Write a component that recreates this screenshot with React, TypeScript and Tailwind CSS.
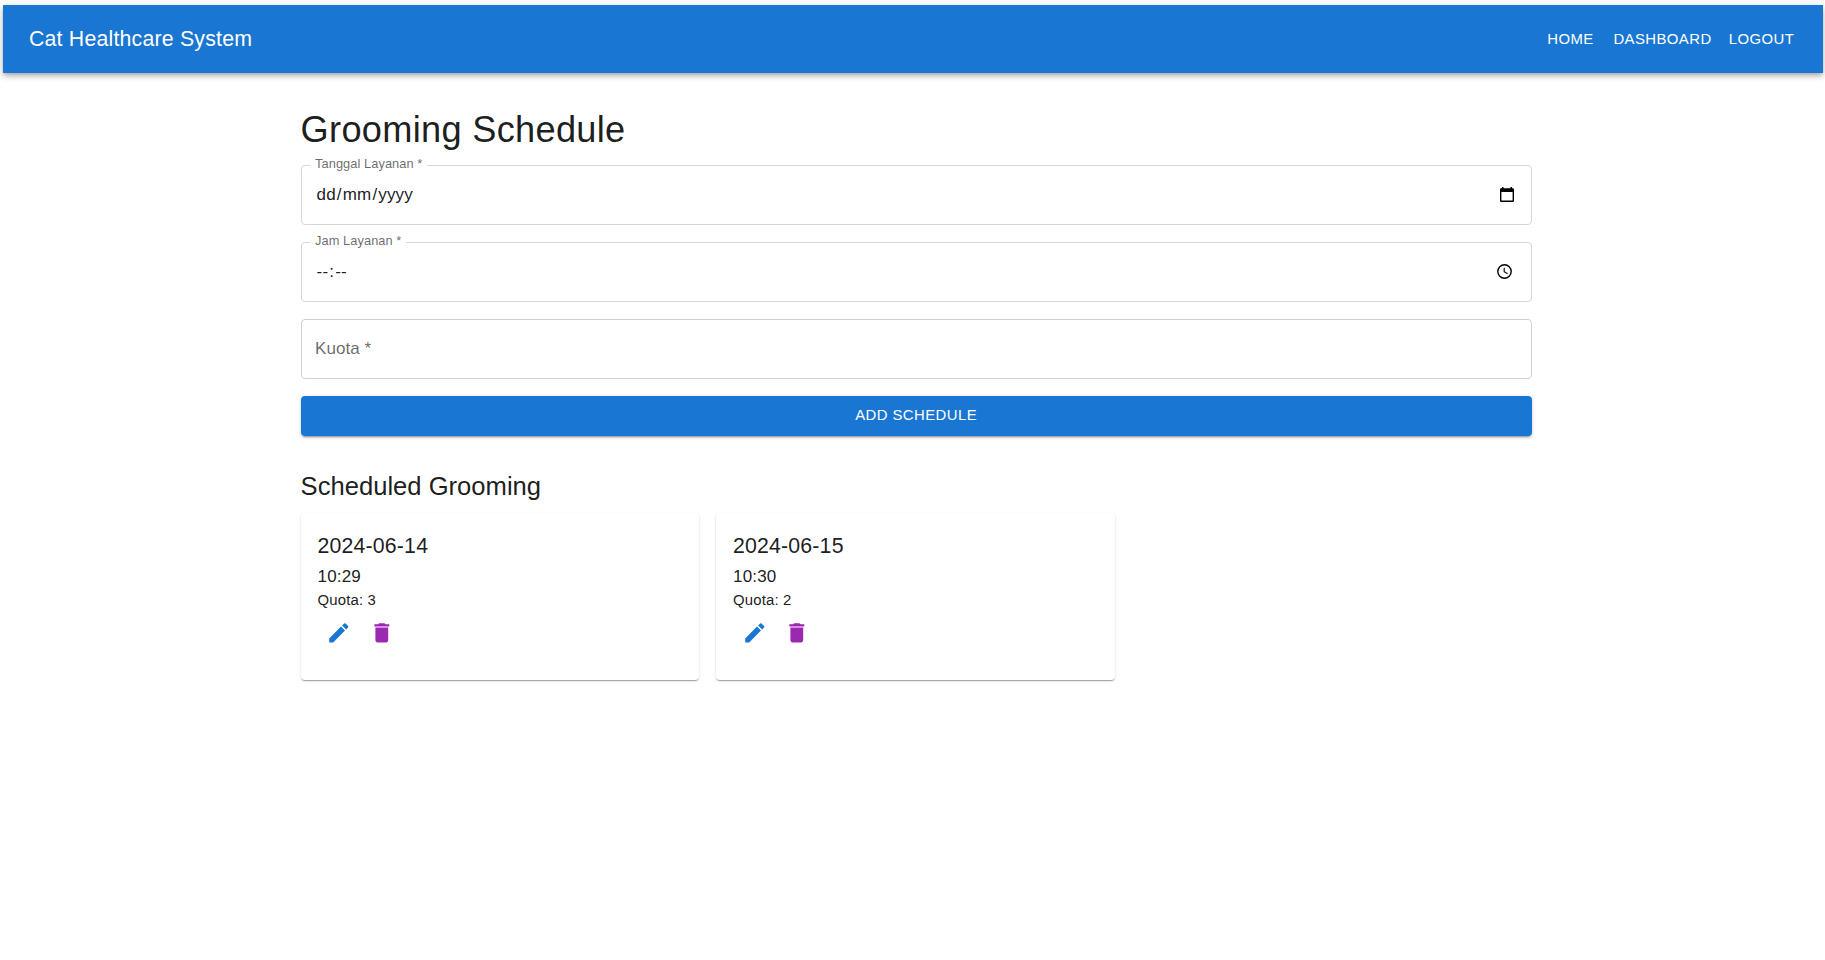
import type { ReactNode } from 'react';

type Schedule = { date: string; time: string; quota: number };

const schedules: Schedule[] = [
  { date: '2024-06-14', time: '10:29', quota: 3 },
  { date: '2024-06-15', time: '10:30', quota: 2 },
];

function CalendarIcon() {
  return (
    <svg viewBox="0 0 14 15" className="mb-px h-[15px] w-[14px]" fill="#000">
      <path d="M2 0h1.5v1.3h7V0H12v1.3h.7c.7 0 1.3.5 1.3 1.2v11.2c0 .7-.6 1.3-1.3 1.3H1.3C.6 15 0 14.4 0 13.7V2.5c0-.7.6-1.2 1.3-1.2H2zM1.4 5v8.600h11.200V5z" />
    </svg>
  );
}

function ClockIcon() {
  return (
    <svg viewBox="0 0 15 15" className="mb-px h-[15px] w-[15px]" fill="none" stroke="#000">
      <circle cx="7.5" cy="7.5" r="6.7" strokeWidth="1.4" />
      <path d="M7.2 3.7v4.1l3.4 2" strokeWidth="1.1" />
    </svg>
  );
}

function PencilIcon() {
  return (
    <svg viewBox="0 0 24 24" className="size-[25.6px] shrink-0" fill="#1976d2">
      <path d="M3 17.25V21h3.750L17.810 9.940l-3.750-3.750zM20.710 7.040c.39-.39.39-1.020 0-1.410l-2.340-2.340a.996.996 0 0 0-1.410 0l-1.830 1.830 3.750 3.750z" />
    </svg>
  );
}

function TrashIcon() {
  return (
    <svg viewBox="0 0 24 24" className="size-[25.6px] shrink-0" fill="#9c27b0">
      <path d="M6 19c0 1.100.9 2 2 2h8c1.100 0 2-.9 2-2V7H6zM19 4h-3.500l-1-1h-5l-1 1H5v2h14z" />
    </svg>
  );
}

function Field({ label, children }: { label: string; children: ReactNode }) {
  return (
    <div className="relative flex h-[60px] items-center justify-between rounded-[4px] border border-[#d6d6d6] pr-[17px] pl-[14px] text-[17px] leading-6 tracking-[0.16px] text-black/90">
      <span className="absolute -top-[10px] left-[8.5px] bg-white px-[5px] text-[12.8px] leading-4 tracking-[0.07px] text-black/60">
        {label}
      </span>
      {children}
    </div>
  );
}

function ScheduleCard({ date, time, quota }: Schedule) {
  return (
    <div className="h-[167px] w-[398.5px] rounded-[4px] bg-white px-[17px] pt-[16px] text-black/90 shadow-[0px_2px_1px_-1px_rgba(0,0,0,0.2),0px_1px_1px_0px_rgba(0,0,0,0.14),0px_1px_3px_0px_rgba(0,0,0,0.12)]">
      <p className="text-[21.3px] leading-[34px] tracking-[0.16px]">{date}</p>
      <p className="mt-px text-[17px] leading-[26px] tracking-[0.16px]">{time}</p>
      <p className="text-[14.9px] leading-[21px] tracking-[0.15px]">Quota: {quota}</p>
      <div className="mt-[9px] flex gap-[17px] pl-[8.5px]">
        <button aria-label="Edit"><PencilIcon /></button>
        <button aria-label="Delete"><TrashIcon /></button>
      </div>
    </div>
  );
}

export default function App() {
  return (
    <div className="min-h-screen bg-white pt-[5px] font-['Liberation_Sans',Arial,sans-serif]">
      <header className="mr-[2px] ml-[3px] flex h-[68px] items-center justify-between bg-[#1976d2] pr-[20px] pl-[26px] text-white shadow-[0px_2px_4px_-1px_rgba(0,0,0,0.2),0px_4px_5px_0px_rgba(0,0,0,0.14),0px_1px_10px_0px_rgba(0,0,0,0.12)]">
        <h1 className="text-[21.3px] leading-8 tracking-[0.2px]">Cat Healthcare System</h1>
        <nav className="flex pb-px text-[14.9px] leading-6 tracking-[0.43px]">
          <a className="w-[69px] text-center">HOME</a>
          <a className="w-[115px] text-center">DASHBOARD</a>
          <a className="w-[83px] text-center">LOGOUT</a>
        </nav>
      </header>

      <main className="ml-[300.6px] w-[1231px] pt-[35px]">
        <h2 className="text-[36.2px] leading-[44px] tracking-[0.3px] text-black/90">Grooming Schedule</h2>
        <form className="mt-[13px] flex flex-col gap-[17px]">
          <Field label="Tanggal Layanan *">
            <span className="flex">
              <span className="px-px">dd</span>/<span className="px-px">mm</span>/<span className="px-px">yyyy</span>
            </span>
            <CalendarIcon />
          </Field>
          <Field label="Jam Layanan *">
            <span className="flex">
              <span className="px-px">--</span>:<span className="px-px">--</span>
            </span>
            <span className="pr-[2px]"><ClockIcon /></span>
          </Field>
          <div className="flex h-[60px] items-center rounded-[4px] border border-[#d0d0d0] px-[13.5px] text-[17px] tracking-[0.05px] text-black/60">
            Kuota *
          </div>
          <button
            type="button"
            className="h-10 rounded-[4px] bg-[#1976d2] pb-[2px] text-[14.9px] tracking-[0.43px] text-white shadow-[0px_3px_1px_-2px_rgba(0,0,0,0.2),0px_2px_2px_0px_rgba(0,0,0,0.14),0px_1px_5px_0px_rgba(0,0,0,0.12)]"
          >
            ADD SCHEDULE
          </button>
        </form>

        <h3 className="mt-[33px] text-[25.6px] leading-[34px] text-black/90">Scheduled Grooming</h3>
        <div className="mt-[10px] flex gap-[17px]">
          {schedules.map((s) => (
            <ScheduleCard key={s.date} {...s} />
          ))}
        </div>
      </main>
    </div>
  );
}
